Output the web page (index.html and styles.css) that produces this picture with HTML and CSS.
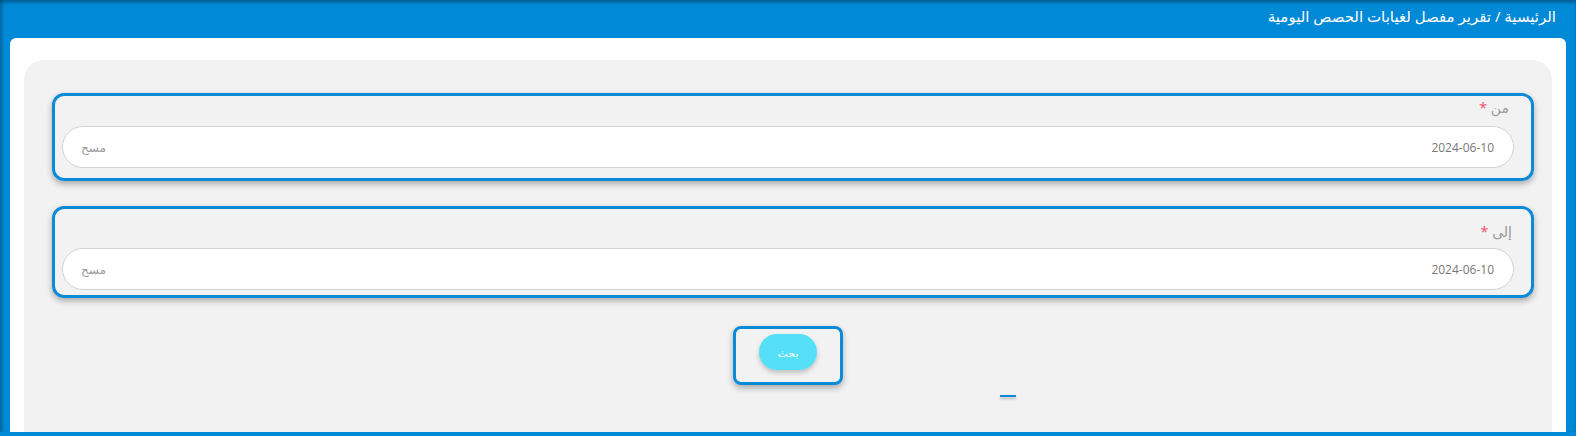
FILE: index.html
```html
<!DOCTYPE html>
<html lang="ar" dir="rtl">

<head>
    <meta charset="UTF-8">
    <meta name="viewport" content="width=device-width, initial-scale=1.0">
    <title>تقرير مفصل لغيابات الحصص اليومية</title>
    <link rel="stylesheet" href="styles.css">
</head>

<body>
    <div class="topbar">الرئيسية / تقرير مفصل لغيابات الحصص اليومية</div>
    <div class="page">
        <div class="panel">
            <div class="field">
                <label class="fieldLabel">من <span class="req">*</span></label>
                <div class="dateInput">
                    <span class="dateVal">2024-06-10</span>
                    <span class="clear">مسح</span>
                </div>
            </div>
            <div class="field fieldTall">
                <label class="fieldLabel">إلى <span class="req">*</span></label>
                <div class="dateInput">
                    <span class="dateVal">2024-06-10</span>
                    <span class="clear">مسح</span>
                </div>
            </div>
            <div class="btnRow">
                <div class="btnBox">
                    <button class="btnSearch">بحث</button>
                </div>
            </div>
            <div class="dash"></div>
        </div>
    </div>
</body>

</html>
```

FILE: styles.css
```css
* {
    box-sizing: border-box;
}

html,
body {
    margin: 0;
    height: 436px;
    overflow: hidden;
}

body {
    background-color: #0089d6;
    font-family: "Open Sans", "Noto Sans", "DejaVu Sans", sans-serif;
    display: flex;
    flex-direction: column;
    border-bottom: 4px solid #0089d6;
    box-shadow: inset 0px 3px 3px rgba(0, 0, 0, 0.25), inset 3px 0px 2px rgba(0, 0, 0, 0.15);
}

.topbar {
    height: 38px;
    flex: none;
    color: white;
    font-size: 15px;
    padding: 6px 20px 0 0;
}

.page {
    flex: 1;
    margin: 0 10px;
    background-color: white;
    border-radius: 6px 6px 0 0;
    padding: 22px 14px 0 14px;
    overflow: hidden;
}

.panel {
    background-color: #f2f2f2;
    border-radius: 20px;
    height: 390px;
    padding: 33px 18px 0 28px;
}

.field {
    border: 3px solid #0b8ad8;
    border-radius: 12px;
    box-shadow: 0px 3px 6px rgba(0, 0, 0, 0.3);
    padding: 0 17px 10px 7px;
    margin-bottom: 25px;
}

.fieldLabel {
    display: block;
    height: 30px;
    padding: 1px 5px 0 0;
    color: #999;
    font-size: 14px;
}

.fieldTall {
    padding-bottom: 5px;
}

.fieldTall .fieldLabel {
    height: 39px;
    padding-top: 12px;
    margin-right: -3px;
}

.req {
    color: #f0506e;
    font-size: 15px;
}

.dateInput {
    height: 42px;
    background-color: white;
    border: 1px solid #d2d2d2;
    border-radius: 21px;
    display: flex;
    justify-content: space-between;
    align-items: center;
    padding: 0 19px 0 18px;
    font-size: 12px;
}

.dateVal {
    color: #777;
}

.clear {
    color: #999;
}

.btnRow {
    display: flex;
    justify-content: center;
    margin-top: 28px;
    padding-right: 10px;
}

.btnBox {
    border: 3px solid #0b8ad8;
    border-radius: 8px;
    box-shadow: 0px 3px 6px rgba(0, 0, 0, 0.3);
    padding: 5px 23px 12px 23px;
}

.btnSearch {
    width: 58px;
    height: 36px;
    border: none;
    border-radius: 18px;
    background-color: #55e0f8;
    color: white;
    font-family: inherit;
    font-size: 11px;
    box-shadow: 0px 3px 5px rgba(0, 0, 0, 0.2);
}

.dash {
    width: 16px;
    height: 2px;
    background-color: #0b8ad8;
    margin: 10px 518px 0 0;
    box-shadow: 0px 2px 3px rgba(0, 0, 0, 0.25);
}
```
